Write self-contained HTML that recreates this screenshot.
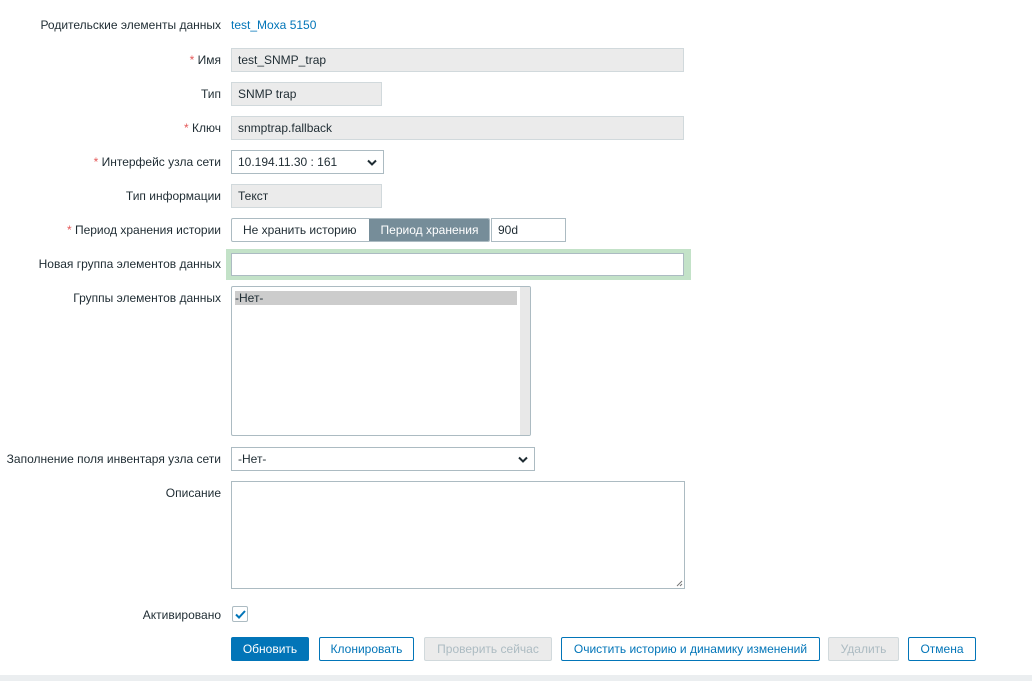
<!DOCTYPE html>
<html><head><meta charset="utf-8"><style>
*{box-sizing:border-box;margin:0;padding:0}
body{width:1032px;height:681px;background:#fff;font-family:"Liberation Sans",Arial,sans-serif;font-size:12px;color:#1f2c33;position:relative;overflow:hidden}
.l{position:absolute;right:811px;text-align:right;white-space:nowrap;line-height:14px}
.r{color:#e45959}
.a{position:absolute}
.inp{position:absolute;height:24px;border:1px solid #d1d9dc;background:#ebebeb;padding:0 6px;line-height:22px}
.w{background:#fff;border-color:#acbbc2}
.btn{position:absolute;top:637px;height:24px;border:1px solid #0275b8;color:#0275b8;background:#fff;text-align:center;line-height:22px;border-radius:2px}
.dis{border-color:#d1d9dc;background:#ebebeb;color:#acbbc2}
</style></head><body>
<div class="l" style="top:18px">Родительские элементы данных</div>
<div class="a" style="left:231px;top:18px;color:#0275b8;line-height:14px">test_Moxa 5150</div>

<div class="l" style="top:53px"><span class="r">*</span> Имя</div>
<div class="inp" style="left:231px;top:48px;width:453px">test_SNMP_trap</div>

<div class="l" style="top:87px">Тип</div>
<div class="inp" style="left:231px;top:82px;width:151px">SNMP trap</div>

<div class="l" style="top:121px"><span class="r">*</span> Ключ</div>
<div class="inp" style="left:231px;top:116px;width:453px">snmptrap.fallback</div>

<div class="l" style="top:155px"><span class="r">*</span> Интерфейс узла сети</div>
<div class="inp w" style="left:231px;top:150px;width:153px">10.194.11.30 : 161
<svg class="a" style="right:6px;top:8px" width="10" height="7" viewBox="0 0 10 7"><path d="M1 1.5L5 5.5L9 1.5" stroke="#1f2c33" stroke-width="2" fill="none"/></svg></div>

<div class="l" style="top:189px">Тип информации</div>
<div class="inp" style="left:231px;top:184px;width:151px">Текст</div>

<div class="l" style="top:223px"><span class="r">*</span> Период хранения истории</div>
<div class="inp w" style="left:231px;top:218px;width:259px;padding:0;border-radius:2px;overflow:hidden">
<span class="a" style="left:11px;top:0">Не хранить историю</span>
<span class="a" style="left:137px;top:0;width:121px;height:22px;background:#768d99;color:#fff;text-align:center">Период хранения</span></div>
<div class="inp w" style="left:491px;top:218px;width:75px">90d</div>

<div class="l" style="top:257px">Новая группа элементов данных</div>
<div class="a" style="left:226px;top:249px;width:465px;height:31px;border:3px solid #c3e2c8;background:#c3e2c8"></div>
<div class="inp w" style="left:231px;top:253px;width:453px;height:23px"></div>

<div class="l" style="top:291px">Группы элементов данных</div>
<div class="a" style="left:231px;top:286px;width:300px;height:150px;border:1px solid #acbbc2;border-radius:2px;overflow:hidden">
<div class="a" style="left:3px;top:4px;width:282px;height:14px;background:#cccccc;line-height:14px">-Нет-</div>
<div class="a" style="right:0;top:0;width:10px;height:150px;background:#e8e8e8"></div></div>

<div class="l" style="top:452px">Заполнение поля инвентаря узла сети</div>
<div class="inp w" style="left:231px;top:447px;width:304px">-Нет-
<svg class="a" style="right:6px;top:8px" width="10" height="7" viewBox="0 0 10 7"><path d="M1 1.5L5 5.5L9 1.5" stroke="#1f2c33" stroke-width="2" fill="none"/></svg></div>

<div class="l" style="top:486px">Описание</div>
<div class="a" style="left:231px;top:481px;width:454px;height:108px;border:1px solid #acbbc2">
<svg class="a" style="right:1px;bottom:1px" width="7" height="7"><path d="M1 6L6 1M4 6L6 4" stroke="#777" stroke-width="1"/></svg></div>

<div class="l" style="top:608px">Активировано</div>
<div class="a" style="left:232px;top:606px;width:16px;height:16px;border:1px solid #acbbc2;border-radius:2px">
<svg class="a" style="left:2px;top:3px" width="11" height="9" viewBox="0 0 11 9"><path d="M1 4.5L4 7.5L10 1" stroke="#0275b8" stroke-width="2" fill="none"/></svg></div>

<div class="btn" style="left:231px;width:78px;background:#0275b8;color:#fff">Обновить</div>
<div class="btn" style="left:319px;width:95px">Клонировать</div>
<div class="btn dis" style="left:424px;width:128px">Проверить сейчас</div>
<div class="btn" style="left:561px;width:259px">Очистить историю и динамику изменений</div>
<div class="btn dis" style="left:828px;width:71px">Удалить</div>
<div class="btn" style="left:908px;width:68px">Отмена</div>

<div class="a" style="left:0;top:675px;width:1032px;height:6px;background:#ebeef0"></div>
</body></html>
